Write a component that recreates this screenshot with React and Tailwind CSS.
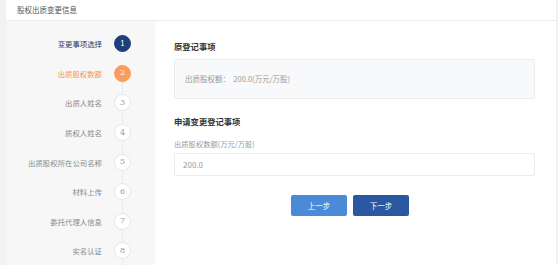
import React from 'react';

const steps = [
  '变更事项选择',
  '出质股权数额',
  '出质人姓名',
  '质权人姓名',
  '出质股权所在公司名称',
  '材料上传',
  '委托代理人信息',
  '实名认证',
];

function Step({ label, index, current }) {
  const done = index < current;
  const active = index === current;
  let circle = 'bg-white border border-[#e3e6ec] text-[#9a9a9a]';
  let text = 'text-[#8a8a8a]';
  if (done) {
    circle = 'bg-[#1e3f78] border border-[#1e3f78] text-white';
    text = 'text-[#2c3e66]';
  }
  if (active) {
    circle = 'bg-[#f99d5c] border border-[#f99d5c] text-white';
    text = 'text-[#f7924c]';
  }
  return (
    <div className="relative flex h-[29.6px] items-center justify-end">
      <span className={`mr-[12px] text-[7.4px] ${text}`}>{label}</span>
      <div
        className={`z-10 mr-[24px] flex h-[17px] w-[17px] items-center justify-center rounded-full text-[8px] ${circle}`}
        style={{ fontFamily: '"DejaVu Serif", serif' }}
      >
        {index + 1}
      </div>
    </div>
  );
}

export default function App() {
  return (
    <div
      className="flex h-[265px] w-[558px] bg-[#f2f2f2] pl-[6px] pr-[2px]"
      style={{ fontFamily: '"Noto Sans CJK SC", "Noto Sans", sans-serif' }}
    >
      <div className="flex flex-1 flex-col bg-white">
        <div className="flex h-[21px] shrink-0 items-center border-b border-[#ebebeb] pl-[11px] text-[7.5px] text-[#555]">
          股权出质变更信息
        </div>
        <div className="flex flex-1 overflow-hidden">
          <div className="relative w-[149px] shrink-0 bg-[#f7f7f7] pt-[8px]">
            <div className="absolute left-[116px] top-[45px] h-[205px] border-l border-dotted border-[#d8dce3]" />
            {steps.map((s, i) => (
              <Step key={s} label={s} index={i} current={1} />
            ))}
          </div>
          <div className="flex-1 pl-[19px] pr-[21px] pt-[19px]">
            <div className="text-[8.3px] font-bold leading-[12px] text-[#333]">原登记事项</div>
            <div className="mt-[7px] flex h-[40px] items-center rounded-[2px] border border-[#e9edf2] bg-[#f8f9fb] pl-[10px] text-[7.5px] text-[#9a9a9a]">
              出质股权额：&nbsp;&nbsp;200.0(万元/万股)
            </div>
            <div className="mt-[16px] text-[8.3px] font-bold leading-[12px] text-[#333]">申请变更登记事项</div>
            <div className="mt-[12px] text-[7.3px] leading-[10px] text-[#9a9a9a]">出质股权数额(万元/万股)</div>
            <div className="mt-[4px] flex h-[23px] items-center rounded-[2px] border border-[#e9ebee] pl-[8px] text-[8px] text-[#9a9a9a]">
              200.0
            </div>
            <div className="mt-[19px] flex justify-center gap-[6px] pr-[9px]">
              <button className="h-[21px] w-[56px] rounded-[2px] bg-[#4a8ad8] text-[7.5px] text-white">上一步</button>
              <button className="h-[21px] w-[56px] rounded-[2px] bg-[#2a58a0] text-[7.5px] text-white">下一步</button>
            </div>
          </div>
        </div>
      </div>
    </div>
  );
}
